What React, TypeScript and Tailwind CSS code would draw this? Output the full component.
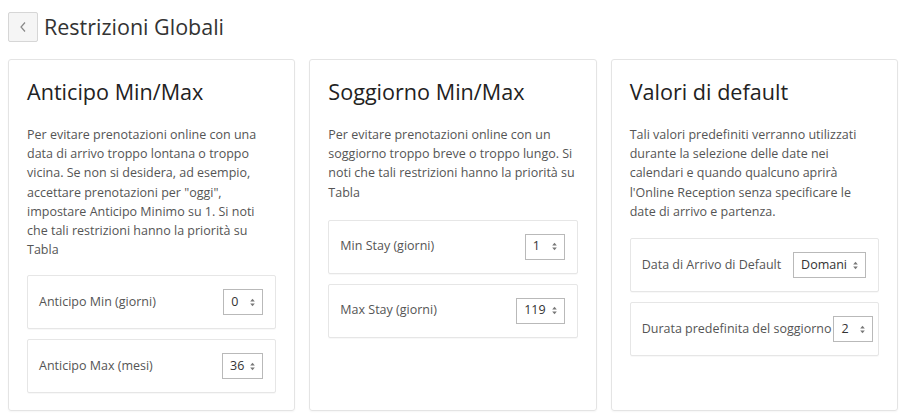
import React from "react";

type Field = { label: string; value: string };
type Section = { title: string; text: string; fields: Field[]; textMb: string };

const sections: Section[] = [
  {
    title: "Anticipo Min/Max",
    text: 'Per evitare prenotazioni online con una data di arrivo troppo lontana o troppo vicina. Se non si desidera, ad esempio, accettare prenotazioni per "oggi", impostare Anticipo Minimo su 1. Si noti che tali restrizioni hanno la priorità su Tabla',
    fields: [
      { label: "Anticipo Min (giorni)", value: "0" },
      { label: "Anticipo Max (mesi)", value: "36" },
    ],
    textMb: "mb-[16px]",
  },
  {
    title: "Soggiorno Min/Max",
    text: "Per evitare prenotazioni online con un soggiorno troppo breve o troppo lungo. Si noti che tali restrizioni hanno la priorità su Tabla",
    fields: [
      { label: "Min Stay (giorni)", value: "1" },
      { label: "Max Stay (giorni)", value: "119" },
    ],
    textMb: "mb-[18px]",
  },
  {
    title: "Valori di default",
    text: "Tali valori predefiniti verranno utilizzati durante la selezione delle date nei calendari e quando qualcuno aprirà l'Online Reception senza specificare le date di arrivo e partenza.",
    fields: [
      { label: "Data di Arrivo di Default", value: "Domani" },
      { label: "Durata predefinita del soggiorno", value: "2" },
    ],
    textMb: "mb-[17px]",
  },
];

function Spinner() {
  // tiny stacked up/down triangles like a native select
  return (
    <svg width="5" height="9" viewBox="0 0 5 9" className="shrink-0">
      <path d="M2.5 0.8 L4.8 3.6 L0.2 3.6 Z" fill="#777" />
      <path d="M0.2 5.4 L4.8 5.4 L2.5 8.2 Z" fill="#777" />
    </svg>
  );
}

function FakeSelect({ value }: { value: string }) {
  return (
    <div className="flex h-[26px] min-w-[40px] shrink-0 items-center justify-between gap-[6px] border border-[#b9b9b9] bg-white pl-[7px] pr-[7px] text-[12.5px] text-[#333]">
      <span>{value}</span>
      <Spinner />
    </div>
  );
}

function FieldRow({ field }: { field: Field }) {
  return (
    <div className="flex h-[54px] items-center justify-between gap-[2px] rounded-[2px] border border-[#e6e6e6] pl-[11px] pr-[12px] shadow-[0_1px_1px_rgba(0,0,0,0.03)]">
      <span className="whitespace-nowrap text-[12.5px] text-[#555]">{field.label}</span>
      <FakeSelect value={field.value} />
    </div>
  );
}

function Card({ section }: { section: Section }) {
  return (
    <div className="rounded-[3px] border border-[#e4e4e4] px-[18px] pb-[17px] pt-[19px] shadow-[0_1px_2px_rgba(0,0,0,0.04)]">
      <h2 className="mb-[20px] text-[21.6px] leading-[26px] font-normal text-[#222]">{section.title}</h2>
      <p className={`text-[12.5px] leading-[19.2px] text-[#555] ${section.textMb}`}>{section.text}</p>
      <div className="flex flex-col gap-[10px]">
        {section.fields.map((f) => (
          <FieldRow key={f.label} field={f} />
        ))}
      </div>
    </div>
  );
}

export default function App() {
  return (
    <div className="min-h-[419px] bg-white pl-2 pr-[7px] pt-3 font-['Open_Sans',sans-serif]">
      {/* Header: back button + page title */}
      <div className="flex items-center gap-[6px]">
        <button className="flex h-[30px] w-[30px] items-center justify-center rounded-[2px] border border-[#d6d6d6] bg-[#f5f5f5]">
          <svg width="8" height="12" viewBox="0 0 8 12">
            <path d="M6 1.5 L2 6 L6 10.5" fill="none" stroke="#888" strokeWidth="1.2" />
          </svg>
        </button>
        <h1 className="text-[21.5px] leading-[30px] text-[#333]">Restrizioni Globali</h1>
      </div>

      <div className="mt-[17px] grid h-[352px] grid-cols-3 gap-[14px]">
        {sections.map((s) => (
          <Card key={s.title} section={s} />
        ))}
      </div>
    </div>
  );
}
